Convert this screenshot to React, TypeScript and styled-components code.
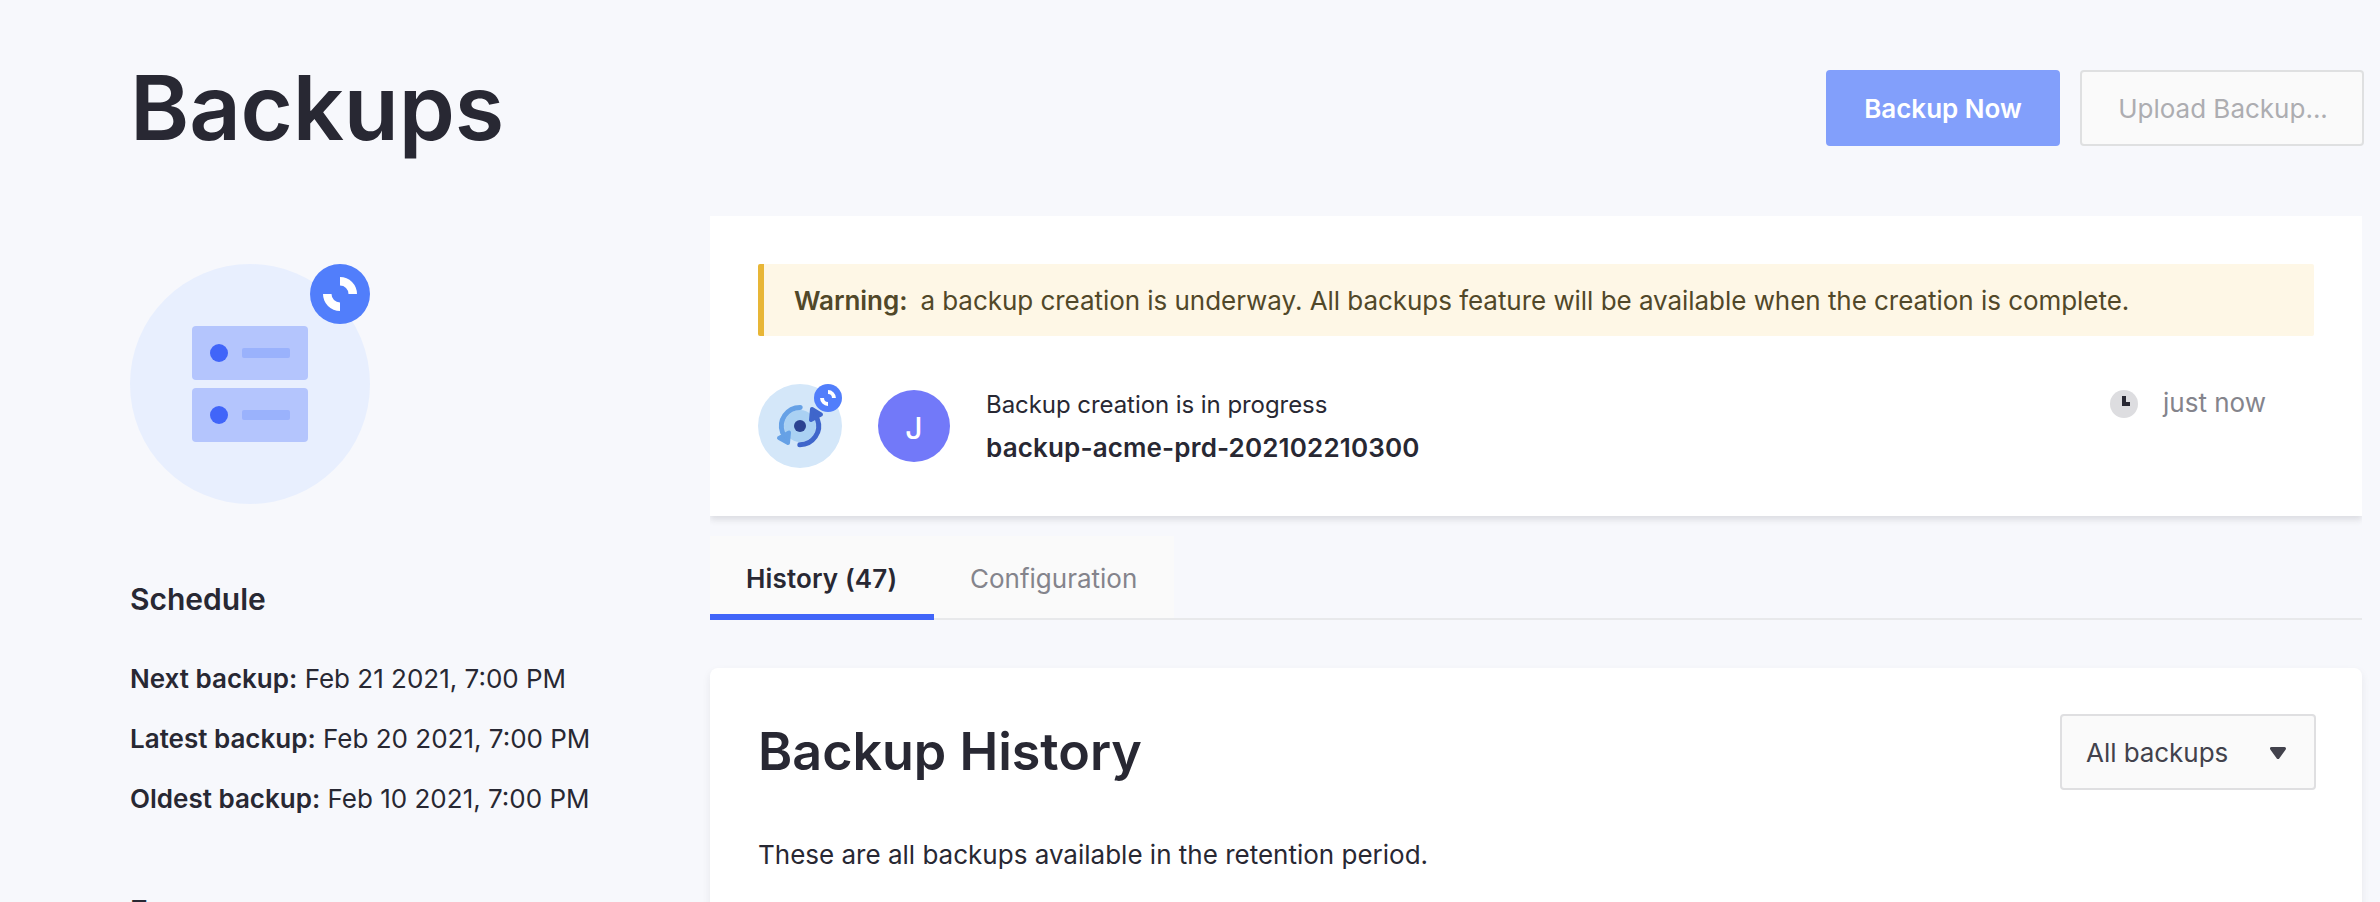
import React from 'react';
import styled, { createGlobalStyle } from 'styled-components';

const GlobalStyle = createGlobalStyle`
  *, *::before, *::after { box-sizing: border-box; }
  html, body { margin: 0; padding: 0; overflow: hidden; background: #f7f8fc; }
  body {
    font-family: Inter, "Liberation Sans", sans-serif;
    font-size: 26px;
    line-height: 40px;
    color: #282833;
  }
`;

const Page = styled.main`
  height: 902px;
  overflow: hidden;
  padding: 70px 16px 0 130px;
`;

const Header = styled.header`
  display: flex;
  justify-content: space-between;
  align-items: flex-start;
  height: 146px;
`;

const PageTitle = styled.h1`
  margin: 0;
  font-size: 90px;
  font-weight: 600;
  line-height: 76px;
  letter-spacing: -0.2px;
`;

const Actions = styled.div`
  display: flex;
  gap: 20px;
`;

const Button = styled.button<{ $primary?: boolean }>`
  width: ${p => (p.$primary ? 234 : 284)}px;
  height: 76px;
  padding: 2px 0 0 ${p => (p.$primary ? 0 : 2)}px;
  border: 2px solid ${p => (p.$primary ? '#829ffb' : '#dfe0e1')};
  border-radius: 4px;
  background: ${p => (p.$primary ? '#829ffb' : '#fafafa')};
  color: ${p => (p.$primary ? '#fff' : '#adadb1')};
  font: inherit;
  font-weight: ${p => (p.$primary ? 600 : 400)};
`;

const Columns = styled.div`
  display: grid;
  grid-template-columns: 580px 1652px;
`;

const Sidebar = styled.aside`
  padding-top: 48px;
`;

const ServerArt = styled.svg`
  display: block;
  width: 240px;
  height: 240px;
  margin-bottom: 75px;
`;

const SidebarHeading = styled.h2`
  margin: 0 0 30px;
  font-size: 30px;
  font-weight: 600;
  line-height: 40px;
`;

const Facts = styled.div`
  display: flex;
  flex-direction: column;
  margin-bottom: 62px;
  line-height: 60px;
`;

const Strong = styled.strong`
  font-weight: 600;
`;

const StatusCard = styled.section`
  height: 300px;
  padding: 48px;
  background: #fff;
  box-shadow: 0 4px 6px rgba(40, 40, 51, 0.12);
  clip-path: inset(0 0 -12px 0);
`;

const Warning = styled.p`
  display: flex;
  align-items: center;
  gap: 13px;
  height: 72px;
  margin: 0 0 48px;
  padding: 2px 0 0 30px;
  border-left: 6px solid #e8b636;
  border-radius: 2px;
  background: #fef7e6;
  color: #514829;
  letter-spacing: -0.045px;
`;

const Activity = styled.div`
  display: flex;
  align-items: flex-start;
`;

const SyncIcon = styled.svg`
  width: 84px;
  height: 84px;
`;

const Avatar = styled.div`
  width: 72px;
  height: 72px;
  margin: 6px 36px 0;
  border-radius: 50%;
  background: #7279f9;
  color: #fff;
  font-size: 30px;
  font-weight: 500;
  line-height: 77px;
  text-align: center;
`;

const ActivityText = styled.div`
  flex: 1;
`;

const ActivityStatus = styled.div`
  font-size: 24px;
  line-height: 42px;
  letter-spacing: -0.06px;
`;

const ActivityName = styled.div`
  font-weight: 600;
  line-height: 44px;
  letter-spacing: 0.15px;
`;

const Timestamp = styled.div`
  display: flex;
  align-items: center;
  gap: 25px;
  width: 204px;
  color: #84848c;
  line-height: 38px;
`;

const ClockIcon = styled.svg`
  width: 28px;
  height: 28px;
  margin-top: 2px;
`;

const TabBar = styled.nav`
  display: flex;
  height: 84px;
  margin: 20px 0 48px;
  background: linear-gradient(#e8e9eb, #e8e9eb) bottom / 100% 2px no-repeat;
`;

const Tab = styled.a<{ $active?: boolean }>`
  height: ${p => (p.$active ? 84 : 82)}px;
  padding: 23px 36px 0;
  width: ${p => (p.$active ? 224 : 240)}px;
  border-bottom: ${p => (p.$active ? '6px solid #4165f9' : '0')};
  background: #fafafa;
  color: ${p => (p.$active ? '#282833' : '#84848c')};
  font-weight: ${p => (p.$active ? 600 : 400)};
  letter-spacing: ${p => (p.$active ? 0.15 : 0)}px;
  white-space: nowrap;
`;

const HistoryPanel = styled.section`
  height: 600px;
  padding: 46px 46px 0 48px;
  border-radius: 8px;
  background: #fff;
  box-shadow: 0 4px 8px rgba(40, 40, 51, 0.08);
`;

const PanelHeader = styled.div`
  display: flex;
  justify-content: space-between;
  align-items: center;
  margin-bottom: 45px;
`;

const PanelTitle = styled.h2`
  margin: 0;
  font-size: 52px;
  font-weight: 600;
  line-height: 76px;
`;

const Select = styled.button`
  display: flex;
  justify-content: space-between;
  align-items: center;
  width: 256px;
  height: 76px;
  padding: 2px 28px 0 24px;
  border: 2px solid #dfdfe1;
  border-radius: 4px;
  background: #fafafa;
  color: #42424c;
  font: inherit;
  letter-spacing: -0.05px;
`;

const Caret = styled.svg`
  width: 16px;
  height: 12px;
`;

const Description = styled.p`
  margin: 0;
`;

/* Two opposite quarter rings on a blue disc, centred on (cx, cy). */
function ProgressBadge({ cx, cy, scale }: { cx: number; cy: number; scale: number }) {
  return (
    <g transform={`translate(${cx} ${cy}) scale(${scale})`}>
      <circle r="30" fill="#517efb" />
      <path d="M0 -17A17 17 0 0 1 17 0H8.5A8.5 8.5 0 0 0 0 -8.5Z" fill="#fff" />
      <path d="M0 17A17 17 0 0 1 -17 0H-8.5A8.5 8.5 0 0 0 0 8.5Z" fill="#fff" />
    </g>
  );
}

function ServerUnit({ y }: { y: number }) {
  return (
    <g transform={`translate(62 ${y})`}>
      <rect width="116" height="54" rx="4" fill="#b4c5fd" />
      <circle cx="27" cy="27" r="9" fill="#4165f9" />
      <rect x="50" y="22" width="48" height="10" rx="2" fill="#9ab2fc" />
    </g>
  );
}

const facts = [
  ['Next backup:', 'Feb 21 2021, 7:00 PM'],
  ['Latest backup:', 'Feb 20 2021, 7:00 PM'],
  ['Oldest backup:', 'Feb 10 2021, 7:00 PM'],
];

export default function App() {
  return (
    <>
      <GlobalStyle />
      <Page>
        <Header>
          <PageTitle>Backups</PageTitle>
          <Actions>
            <Button $primary>Backup Now</Button>
            <Button>Upload Backup...</Button>
          </Actions>
        </Header>
        <Columns>
          <Sidebar>
            <ServerArt viewBox="0 0 240 240">
              <circle cx="120" cy="120" r="120" fill="#e8effe" />
              <ServerUnit y={62} />
              <ServerUnit y={124} />
              <ProgressBadge cx={210} cy={30} scale={1} />
            </ServerArt>
            <SidebarHeading>Schedule</SidebarHeading>
            <Facts>
              {facts.map(([label, value]) => (
                <div key={label}>
                  <Strong>{label}</Strong> {value}
                </div>
              ))}
            </Facts>
            <SidebarHeading>Frequency</SidebarHeading>
          </Sidebar>
          <div>
            <StatusCard>
              <Warning>
                <Strong>Warning:</Strong>
                <span>
                  a backup creation is underway. All backups feature will be available when the
                  creation is complete.
                </span>
              </Warning>
              <Activity>
                <SyncIcon viewBox="0 0 84 84">
                  <circle cx="42" cy="42" r="42" fill="#d4e7f9" />
                  <circle cx="42" cy="42" r="16" fill="#aad1f3" />
                  <g fill="none" strokeWidth="5" strokeLinecap="round">
                    <path d="M42.2 23.4A18.7 18.7 0 0 0 24.6 48.7" stroke="#66a1e6" />
                    <path d="M41.8 60.7A18.7 18.7 0 0 0 59.4 35.3" stroke="#3f66cb" />
                  </g>
                  <path
                    d="M21 54L31 48.5L30 59Z"
                    fill="#66a1e6"
                    stroke="#66a1e6"
                    strokeWidth="4"
                    strokeLinejoin="round"
                  />
                  <path
                    d="M54 25L63 30.5L53 36Z"
                    fill="#3f66cb"
                    stroke="#3f66cb"
                    strokeWidth="4"
                    strokeLinejoin="round"
                  />
                  <circle cx="42" cy="42" r="6" fill="#2c4391" />
                  <ProgressBadge cx={70} cy={14} scale={14 / 30} />
                </SyncIcon>
                <Avatar>J</Avatar>
                <ActivityText>
                  <ActivityStatus>Backup creation is in progress</ActivityStatus>
                  <ActivityName>backup-acme-prd-202102210300</ActivityName>
                </ActivityText>
                <Timestamp>
                  <ClockIcon viewBox="0 0 28 28">
                    <circle cx="14" cy="14" r="14" fill="#dddde0" />
                    <path d="M12 6H16V12H20V16H12Z" fill="#282833" />
                  </ClockIcon>
                  just now
                </Timestamp>
              </Activity>
            </StatusCard>
            <TabBar>
              <Tab $active>History (47)</Tab>
              <Tab>Configuration</Tab>
            </TabBar>
            <HistoryPanel>
              <PanelHeader>
                <PanelTitle>Backup History</PanelTitle>
                <Select>
                  All backups
                  <Caret viewBox="0 0 16 12">
                    <path
                      d="M1.5 1.5H14.5L8 10.5Z"
                      fill="#42424c"
                      stroke="#42424c"
                      strokeWidth="3"
                      strokeLinejoin="round"
                    />
                  </Caret>
                </Select>
              </PanelHeader>
              <Description>These are all backups available in the retention period.</Description>
            </HistoryPanel>
          </div>
        </Columns>
      </Page>
    </>
  );
}
